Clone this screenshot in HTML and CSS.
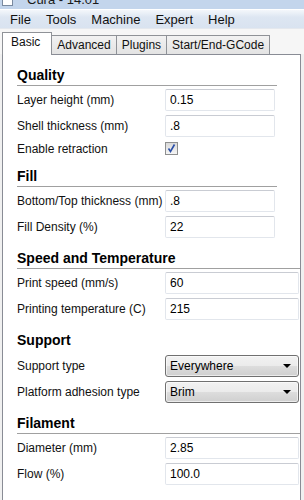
FILE: index.html
```html
<!DOCTYPE html>
<html lang="en">
<head>
  <meta charset="UTF-8">
  <title>Cura - Basic settings</title>
  <link rel="stylesheet" href="styles.css">
</head>
<body>
  <div class="titlebar">
    <span class="app-icon"></span>
    <span class="title"><span>Cura - 14.01</span></span>
  </div>
  <div class="menubar">
    <span>File</span>
    <span>Tools</span>
    <span>Machine</span>
    <span>Expert</span>
    <span>Help</span>
  </div>
  <div class="tabs">
    <span class="tab active">Basic</span>
    <span class="tab">Advanced</span>
    <span class="tab">Plugins</span>
    <span class="tab">Start/End-GCode</span>
  </div>
  <div class="panel">
    <div class="section narrow">
      <div class="heading">Quality</div>
      <div class="row"><span class="label">Layer height (mm)</span><input class="field" value="0.15" readonly></div>
      <div class="row"><span class="label">Shell thickness (mm)</span><input class="field" value=".8" readonly></div>
      <div class="row check-row"><span class="label">Enable retraction</span>
        <span class="checkbox">
          <svg width="11" height="11" viewBox="0 0 11 11"><path d="M2.5 5.5 L4.5 8.5 L8.5 1.5" fill="none" stroke="#2a4fa8" stroke-width="1.6"/></svg>
        </span>
      </div>
    </div>
    <div class="section narrow">
      <div class="heading">Fill</div>
      <div class="row"><span class="label">Bottom/Top thickness (mm)</span><input class="field" value=".8" readonly></div>
      <div class="row"><span class="label">Fill Density (%)</span><input class="field" value="22" readonly></div>
    </div>
    <div class="section wide">
      <div class="heading">Speed and Temperature</div>
      <div class="row"><span class="label">Print speed (mm/s)</span><input class="field" value="60" readonly></div>
      <div class="row"><span class="label">Printing temperature (C)</span><input class="field" value="215" readonly></div>
    </div>
    <div class="section wide">
      <div class="heading plain">Support</div>
      <div class="row"><span class="label">Support type</span><span class="field combo">Everywhere<span class="arrow"></span></span></div>
      <div class="row"><span class="label">Platform adhesion type</span><span class="field combo">Brim<span class="arrow"></span></span></div>
    </div>
    <div class="section wide">
      <div class="heading">Filament</div>
      <div class="row"><span class="label">Diameter (mm)</span><input class="field" value="2.85" readonly></div>
      <div class="row"><span class="label">Flow (%)</span><input class="field" value="100.0" readonly></div>
    </div>
  </div>
</body>
</html>
```

FILE: styles.css
```css
body {
  margin: 0;
  background: #f0f0f0;
  font-family: "Liberation Sans", Arial, sans-serif;
  font-size: 12px;
  color: #111;
  overflow: hidden;
}
.titlebar {
  height: 9px;
  background: #c3d5ec;
  display: flex;
  align-items: flex-start;
  overflow: hidden;
  padding-left: 2px;
}
.app-icon {
  width: 9px;
  height: 5px;
  background: #fff;
  border: 1px solid #7a8aa0;
  border-top: none;
}
.title {
  height: 6px;
  overflow: hidden;
  margin-left: 14px;
  font-size: 13px;
  line-height: 13px;
  color: #1a1a1a;
}
.title span {
  display: block;
  margin-top: -7px;
}
.menubar {
  height: 18px;
  display: flex;
  align-items: center;
  padding-left: 3px;
  font-size: 13px;
  background: linear-gradient(#f4f7fb, #dde6f2 40%, #d9e3f0);
  border-top: 1px solid #fff;
  border-bottom: 1px solid #e4e8ee;
}
.menubar span {
  padding: 0 8px 0 7px;
}
.tabs {
  display: flex;
  align-items: flex-end;
  padding: 3px 0 0 2px;
  background: #f6f6f6;
}
.tab {
  height: 18px;
  line-height: 18px;
  padding: 0 5px;
  border: 1px solid #8f9297;
  border-bottom: none;
  margin-right: -1px;
  background: linear-gradient(#f2f2f2, #e3e3e3);
}
.tab.active {
  height: 22px;
  line-height: 19px;
  padding: 0 11px 0 8px;
  background: #fff;
  position: relative;
  margin-bottom: -1px;
  z-index: 1;
}
.panel {
  background: #fff;
  border: 1px solid #898c95;
  border-bottom: none;
  margin: 0 3px 0 2px;
  padding: 12px 0 40px 14px;
}
.section {
  margin-bottom: 12px;
}
.section.narrow {
  width: 260px;
}
.section.wide {
  width: 283px;
}
.heading {
  font-weight: bold;
  font-size: 14px;
  line-height: 17px;
  padding-bottom: 1px;
  border-bottom: 1px solid #a0a0a0;
  margin-bottom: 3px;
  color: #000;
}
.heading.plain {
  border-bottom-color: transparent;
  margin-bottom: 4px;
}
.row {
  display: flex;
  align-items: center;
  height: 22px;
  margin-bottom: 4px;
}
.section .row:last-child {
  margin-bottom: 0;
}
.row.check-row {
  height: 15px;
}
.label {
  width: 148px;
  flex-shrink: 0;
}
.field {
  box-sizing: border-box;
  height: 22px;
  margin: 0;
  padding: 0 4px;
  font-family: inherit;
  font-size: 12px;
  color: #000;
  border: 1px solid #e2e6ec;
  border-top-color: #c9ccd3;
  border-radius: 2px;
  background: #fff;
  outline: none;
}
.narrow .field {
  width: 110px;
}
.wide .field {
  width: 134px;
}
.combo {
  display: flex;
  align-items: center;
  border: 1px solid #707070;
  border-radius: 3px;
  background: linear-gradient(#f2f2f2, #ebebeb 50%, #dddddd 51%, #cfcfcf);
  box-shadow: inset 0 0 0 1px rgba(255, 255, 255, 0.6);
}
.arrow {
  margin-left: auto;
  margin-right: 3px;
  width: 0;
  height: 0;
  border-left: 4px solid transparent;
  border-right: 4px solid transparent;
  border-top: 4px solid #000;
}
.checkbox {
  box-sizing: border-box;
  width: 13px;
  height: 13px;
  border: 1px solid #8e8f8f;
  background: linear-gradient(#d9d9d9, #f5f5f5);
  display: flex;
  align-items: center;
  justify-content: center;
}
```
